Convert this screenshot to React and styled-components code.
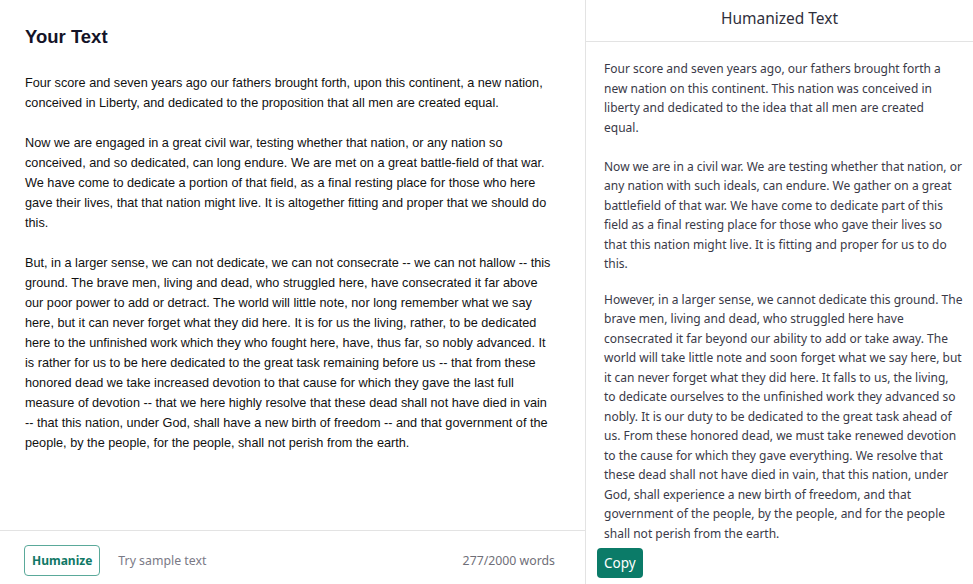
import React from "react";
import styled, { createGlobalStyle } from "styled-components";

const Global = createGlobalStyle`
  html, body { margin: 0; padding: 0; background: #fff; }
  #root { height: 584px; }
`;

const Page = styled.div`
  display: flex;
  width: 973px;
  height: 584px;
  overflow: hidden;
  background: #fff;
`;

const InputPane = styled.section`
  width: 585px;
  flex: none;
  display: flex;
  flex-direction: column;
  border-right: 1px solid #e3e3e3;
`;

const InputBody = styled.div`
  flex: 1;
  padding: 26px 30px 0 25px;
`;

const Title = styled.h2`
  margin: 0 0 25px;
  font-family: "Liberation Sans", Arial, sans-serif;
  font-size: 18.5px;
  font-weight: 700;
  color: #141428;
  line-height: 22px;
`;

const InputPara = styled.p`
  margin: 0 0 20px;
  font-family: "Liberation Sans", Arial, sans-serif;
  font-size: 12.7px;
  line-height: 20px;
  color: #111;
`;

const Footer = styled.div`
  height: 54px;
  flex: none;
  box-sizing: border-box;
  border-top: 1px solid #e3e3e3;
  display: flex;
  align-items: center;
  padding: 5px 30px 0 24px;
  gap: 18px;
  font-family: "Noto Sans", sans-serif;
`;

const OutlineButton = styled.button`
  height: 31px;
  padding: 0 7px;
  border: 1px solid #5aa99a;
  border-radius: 4px;
  background: #fff;
  color: #0f7866;
  font-family: "Noto Sans", sans-serif;
  font-weight: 700;
  font-size: 12px;
`;

const LinkText = styled.span`
  color: #7a7a86;
  font-size: 12.3px;
`;

const Count = styled.span`
  margin-left: auto;
  color: #6f6f78;
  font-size: 12.3px;
`;

const OutputPane = styled.section`
  flex: 1;
  display: flex;
  flex-direction: column;
  min-width: 0;
`;

const OutputHeader = styled.div`
  height: 42px;
  flex: none;
  box-sizing: border-box;
  border-bottom: 1px solid #e3e3e3;
  display: flex;
  justify-content: center;
  padding-top: 7px;
  font-family: "Noto Sans", sans-serif;
  font-size: 15.5px;
  line-height: 22px;
  color: #2f2f3c;
`;

const OutputBody = styled.div`
  padding: 17px 10px 0 18px;
  font-family: "Noto Sans", sans-serif;
  font-size: 12px;
  line-height: 19.5px;
  color: #3a3a48;
`;

const OutputPara = styled.p`
  margin: 0 0 ${(p) => p.$gap}px;
  max-width: ${(p) => p.$max || "none"};
`;

const SolidButton = styled.button`
  margin: 5px 0 0 11px;
  align-self: flex-start;
  height: 30px;
  padding: 0 7px;
  border: none;
  border-radius: 4px;
  background: #0b7b68;
  color: #fff;
  font-family: "Noto Sans", sans-serif;
  font-size: 13.5px;
`;

const dash = "-\u2060-";

const inputParas = [
  "Four score and seven years ago our fathers brought forth, upon this continent, a new nation, conceived in Liberty, and dedicated to the proposition that all men are created equal.",
  "Now we are engaged in a great civil war, testing whether that nation, or any nation so conceived, and so dedicated, can long endure. We are met on a great battle-field of that war. We have come to dedicate a portion of that field, as a final resting place for those who here gave their lives, that that nation might live. It is altogether fitting and proper that we should do this.",
  `But, in a larger sense, we can not dedicate, we can not consecrate ${dash} we can not hallow ${dash} this ground. The brave men, living and dead, who struggled here, have consecrated it far above our poor power to add or detract. The world will little note, nor long remember what we say here, but it can never forget what they did here. It is for us the living, rather, to be dedicated here to the unfinished work which they who fought here, have, thus far, so nobly advanced. It is rather for us to be here dedicated to the great task remaining before us ${dash} that from these honored dead we take increased devotion to that cause for which they gave the last full measure of devotion ${dash} that we here highly resolve that these dead shall not have died in vain ${dash} that this nation, under God, shall have a new birth of freedom ${dash} and that government of the people, by the people, for the people, shall not perish from the earth.`,
];

const outputParas = [
  {
    gap: 19.5,
    max: "356px",
    text: "Four score and seven years ago, our fathers brought forth a new nation on this continent. This nation was conceived in liberty and dedicated to the idea that all men are created equal.",
  },
  {
    gap: 16,
    text: "Now we are in a civil war. We are testing whether that nation, or any nation with such ideals, can endure. We gather on a great battlefield of that war. We have come to dedicate part of this field as a final resting place for those who gave their lives so that this nation might live. It is fitting and proper for us to do this.",
  },
  {
    gap: 0,
    text: "However, in a larger sense, we cannot dedicate this ground. The brave men, living and dead, who struggled here have consecrated it far beyond our ability to add or take away. The world will take little note and soon forget what we say here, but it can never forget what they did here. It falls to us, the living, to dedicate ourselves to the unfinished work they advanced so nobly. It is our duty to be dedicated to the great task ahead of us. From these honored dead, we must take renewed devotion to the cause for which they gave everything. We resolve that these dead shall not have died in vain, that this nation, under God, shall experience a new birth of freedom, and that government of the people, by the people, and for the people shall not perish from the earth.",
  },
];

export default function App() {
  return (
    <>
      <Global />
      <Page>
        <InputPane>
          <InputBody>
            <Title>Your Text</Title>
            {inputParas.map((t, i) => (
              <InputPara key={i}>{t}</InputPara>
            ))}
          </InputBody>
          <Footer>
            <OutlineButton>Humanize</OutlineButton>
            <LinkText>Try sample text</LinkText>
            <Count>277/2000 words</Count>
          </Footer>
        </InputPane>
        <OutputPane>
          <OutputHeader>Humanized Text</OutputHeader>
          <OutputBody>
            {outputParas.map((p, i) => (
              <OutputPara key={i} $gap={p.gap} $max={p.max}>
                {p.text}
              </OutputPara>
            ))}
          </OutputBody>
          <SolidButton>Copy</SolidButton>
        </OutputPane>
      </Page>
    </>
  );
}
